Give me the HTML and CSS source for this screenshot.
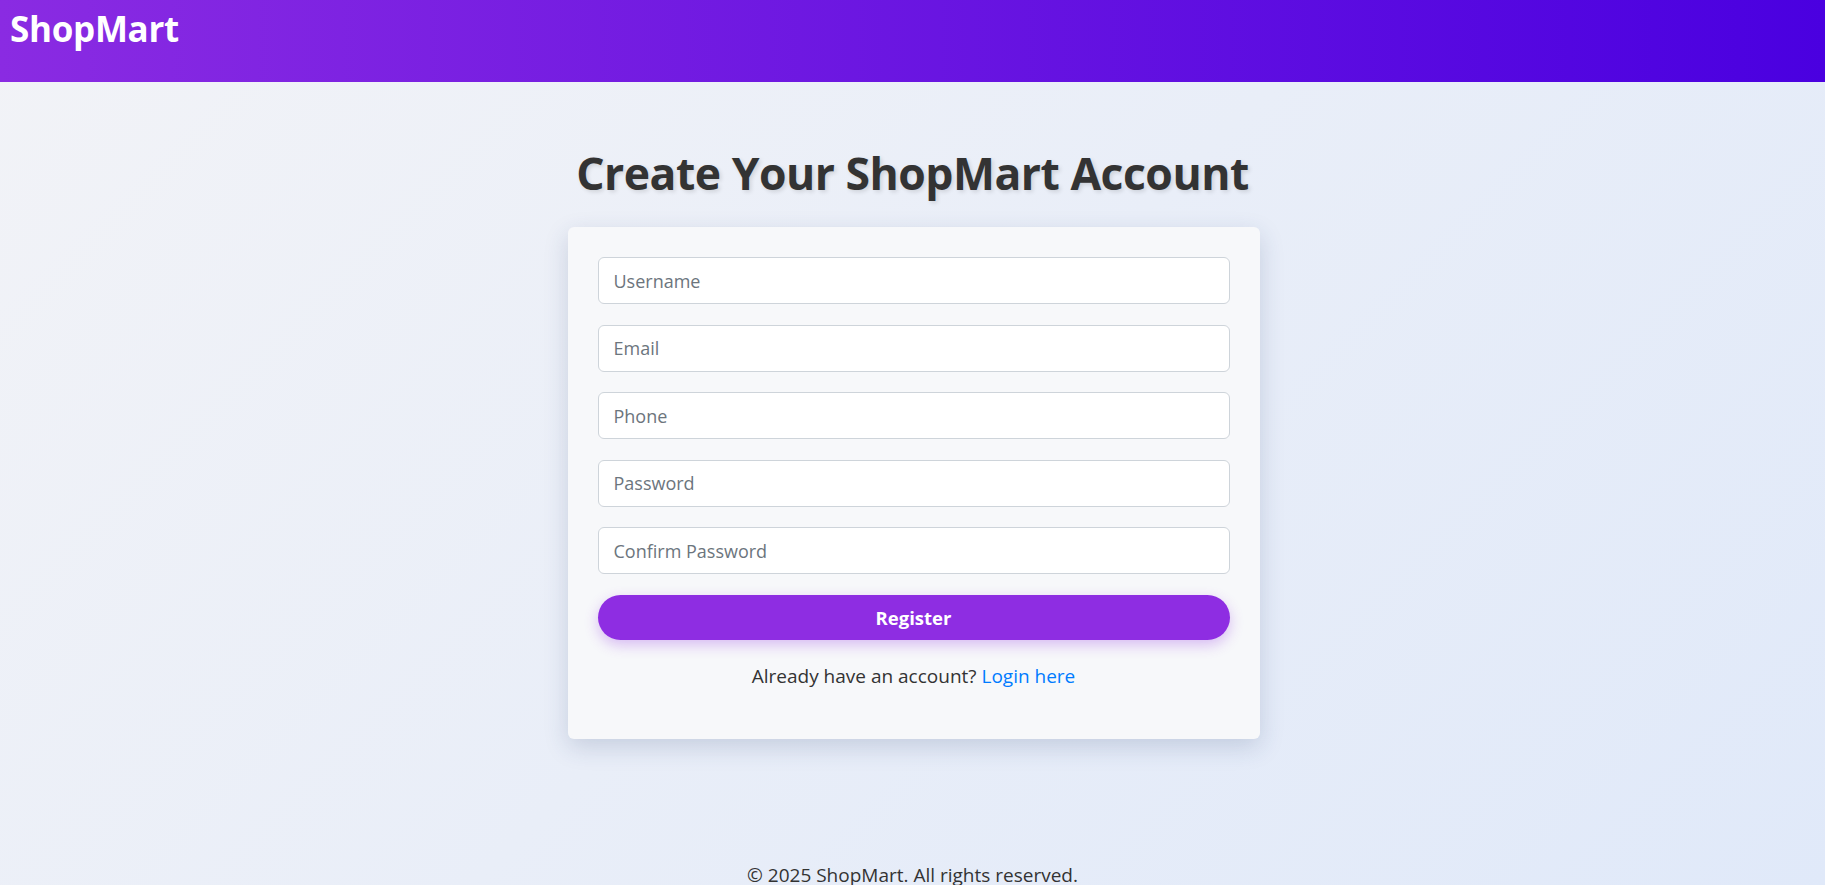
FILE: index.html
```html
<!DOCTYPE html>
<html lang="en">
<head>
<meta charset="utf-8">
<title>Register - ShopMart</title>
<link rel="stylesheet" href="styles.css">
</head>
<body>
<header class="site-header">
  <h1 class="logo">ShopMart</h1>
</header>
<main class="page">
  <h2 class="page-title">Create Your ShopMart Account</h2>
  <form class="card" onsubmit="return false;">
    <input class="field" type="text" placeholder="Username">
    <input class="field" type="email" placeholder="Email">
    <input class="field" type="tel" placeholder="Phone">
    <input class="field" type="password" placeholder="Password">
    <input class="field" type="password" placeholder="Confirm Password">
    <button class="btn" type="submit">Register</button>
    <p class="switch">Already have an account? <a href="#" class="link">Login here</a></p>
  </form>
</main>
<footer class="site-footer">
  <p>&copy; 2025 ShopMart. All rights reserved.</p>
</footer>
</body>
</html>
```
FILE: styles.css
```css
* { box-sizing: border-box; }
html, body { margin: 0; padding: 0; }
body {
  font-family: "Open Sans", "Noto Sans", sans-serif;
  color: #333;
  background: linear-gradient(135deg, #f2f3f7 0%, #e0e9f9 100%);
  min-height: 100vh;
}
.site-header {
  height: 82px;
  padding: 6px 10px;
  background: linear-gradient(90deg, #8a2be2 0%, #4a00e0 100%);
}
.logo {
  margin: 0;
  color: #fff;
  font-size: 35px;
  font-weight: 700;
  line-height: 46px;
  letter-spacing: -0.3px;
}
.page {
  display: flex;
  flex-direction: column;
  align-items: center;
  padding-top: 60px;
}
.page-title {
  margin: 0 0 23px;
  font-size: 44.5px;
  font-weight: 700;
  line-height: 1.4;
  color: #333;
  letter-spacing: -0.5px;
  text-shadow: 2px 2px 4px rgba(0,0,0,0.12);
}
.card {
  width: 692px;
  margin-left: 2px;
  padding: 30px 30px 26px;
  background: #f7f8fa;
  border-radius: 6px;
  box-shadow: 0 8px 24px rgba(40, 60, 110, 0.18);
  display: flex;
  flex-direction: column;
}
.field {
  height: 47px;
  margin-bottom: 20.5px;
  padding: 0 15px;
  font-family: inherit;
  font-size: 18px;
  color: #333;
  background: #fff;
  border: 1px solid #ced4da;
  border-radius: 6px;
  outline: none;
}
.field::placeholder { color: #6c757d; }
.btn {
  height: 45px;
  margin-top: 0;
  border: none;
  border-radius: 24px;
  background: #8e2de2;
  color: #fff;
  font-family: inherit;
  font-size: 18.5px;
  font-weight: 700;
  box-shadow: 0 5px 14px rgba(142, 45, 226, 0.3);
  cursor: pointer;
}
.switch {
  margin: 23px 0 24px;
  text-align: center;
  font-size: 19px;
  line-height: 1.4;
}
.link { color: #007bff; text-decoration: none; }
.site-footer {
  padding-top: 123px;
  text-align: center;
  font-size: 19px;
}
.site-footer p { margin: 0; }
```
